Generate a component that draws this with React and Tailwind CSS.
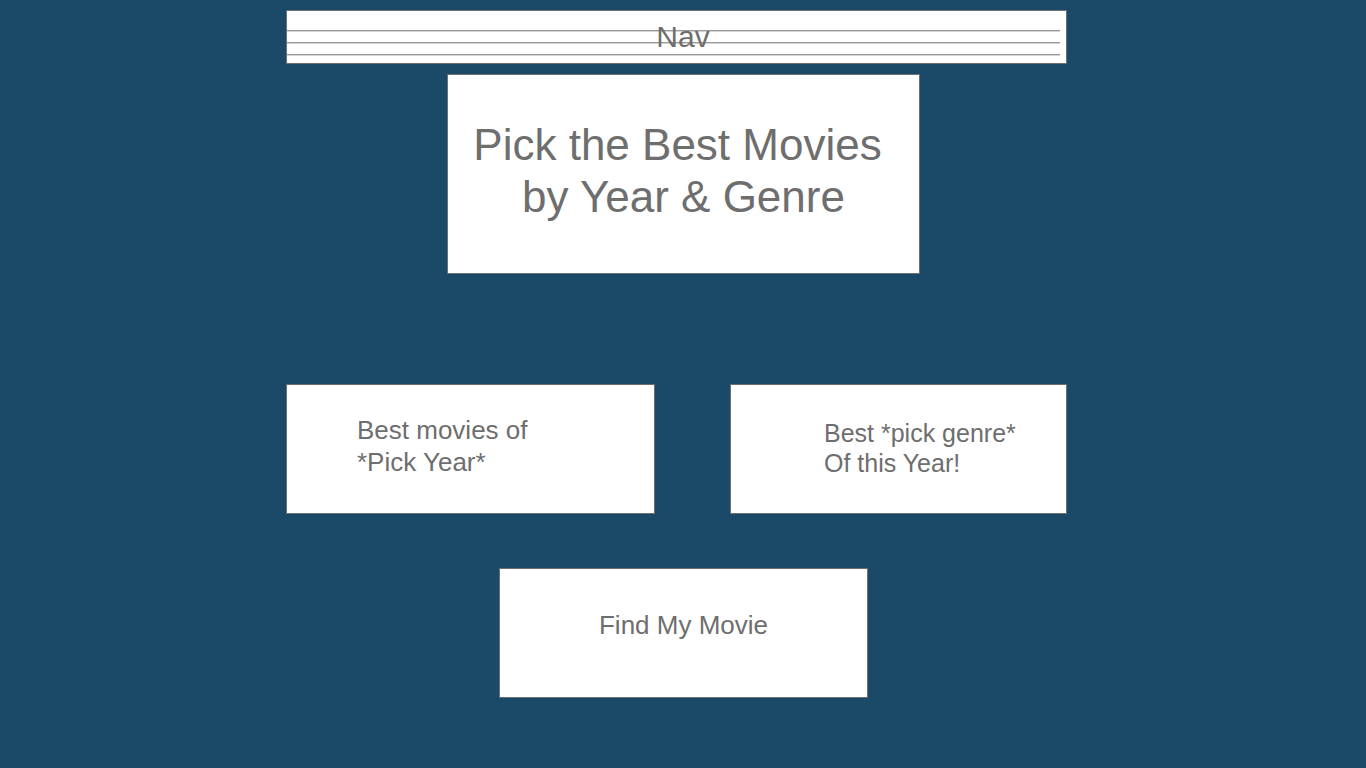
const font = { fontFamily: '"Liberation Sans", Arial, sans-serif' }

const NavLine = () => (
  <div>
    <div className="h-px bg-[#9a9a9a]" />
    <div className="h-px bg-[#d4d4d4]" />
  </div>
)

const App = () => {
  return (
    <div className="min-h-screen w-full bg-[#1b4a68] text-[#6e6e6e]" style={font}>
      <div className="ml-[286px] w-[781px] pt-[10px] flex flex-col">
        {/* nav sketch */}
        <div className="relative h-[54px] bg-white border border-[#6f6f6f] pt-[19px] pr-[6px]">
          <div className="relative flex flex-col gap-[10px]">
            <NavLine />
            <NavLine />
            <NavLine />
          </div>
          <div className="absolute inset-x-0 top-[12px] pl-[13px] text-center text-[30px] leading-[28px]">
            Nav
          </div>
        </div>

        {/* title */}
        <div className="mt-[10px] ml-[161px] w-[473px] h-[200px] bg-white border border-[#6f6f6f] pt-[44px] text-center text-[44px] leading-[52px]">
          <div className="pr-[12px]">Pick the Best Movies</div>
          <div>by Year &amp; Genre</div>
        </div>

        {/* pickers */}
        <div className="mt-[110px] flex justify-between">
          <div className="w-[369px] h-[130px] bg-white border border-[#6f6f6f] pt-[29px] pl-[70px] text-[26px] leading-[32px]">
            <div>Best movies of</div>
            <div>*Pick Year*</div>
          </div>
          <div className="w-[337px] h-[130px] bg-white border border-[#6f6f6f] pt-[33px] pl-[93px] text-[25px] leading-[30px]">
            <div>Best *pick genre*</div>
            <div>Of this Year!</div>
          </div>
        </div>

        {/* action */}
        <div className="mt-[54px] ml-[213px] w-[369px] h-[130px] bg-white border border-[#6f6f6f] pt-[40px] text-center text-[26px] leading-[32px]">
          Find My Movie
        </div>
      </div>
    </div>
  )
}

export default App
